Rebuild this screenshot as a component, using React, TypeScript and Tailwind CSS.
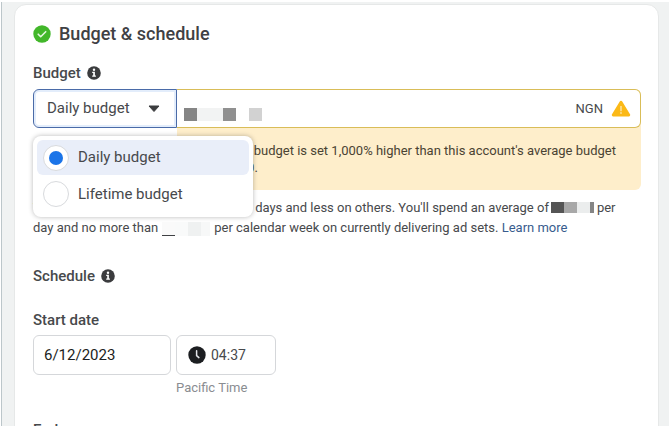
import React, { useState } from "react";
import clsx from "clsx";

const options = [
  { id: "daily", name: "Daily budget" },
  { id: "lifetime", name: "Lifetime budget" },
];

const InfoIcon = () => (
  <svg viewBox="0 0 14 14" className="size-[14px]" aria-hidden="true">
    <circle cx="7" cy="7" r="6.8" fill="#3b3c3e" />
    <circle cx="7" cy="3.7" r="1.2" fill="#fff" />
    <path d="M5.2 5.8h2.7v3.8h1v1.2H5.2V9.6h1V7h-1z" fill="#fff" />
  </svg>
);

const CheckIcon = () => (
  <svg viewBox="0 0 18 18" className="size-[18px]" aria-hidden="true">
    <circle cx="9" cy="9" r="8.7" fill="#42b72a" />
    <path
      d="M5.2 9.2l2.5 2.5 5-5"
      fill="none"
      stroke="#e4f8df"
      strokeWidth="1.6"
      strokeLinecap="round"
      strokeLinejoin="round"
    />
  </svg>
);

const WarningIcon = () => (
  <svg viewBox="0 0 20 18" className="h-[18px] w-5" aria-hidden="true">
    <path
      d="M8.6 1.7a1.6 1.6 0 0 1 2.8 0l7.6 12.6a1.4 1.4 0 0 1-1.2 2.1H2.2a1.4 1.4 0 0 1-1.2-2.1z"
      fill="#fbb917"
    />
    <path d="M9.2 6h1.6v5.2H9.2z" fill="#fde09a" />
    <circle cx="10" cy="13" r="0.9" fill="#fde09a" />
  </svg>
);

const ClockIcon = () => (
  <svg viewBox="0 0 18 18" className="size-[18px] shrink-0" aria-hidden="true">
    <circle cx="9" cy="9" r="8.7" fill="#1c1e21" />
    <path
      d="M8.6 4.8v4.8l2.3 2"
      fill="none"
      stroke="#e4e6eb"
      strokeWidth="1.5"
      strokeLinecap="round"
    />
  </svg>
);

const BudgetMenu = ({
  value,
  onChange,
}: {
  value: string;
  onChange: (id: string) => void;
}) => (
  <div
    role="radiogroup"
    aria-label="Budget type"
    className="absolute top-full left-0 z-10 mt-2 w-[220px] rounded-lg bg-white p-1 shadow-[0_0_5px_rgba(0,0,0,0.28)]"
  >
    {options.map((option) => (
      <label
        key={option.id}
        className={clsx(
          "flex items-center gap-[9px] rounded-md px-[6px] text-[15px] text-[#47494c]",
          value === option.id ? "h-[35px] bg-[#e9eef9]" : "h-[38px]"
        )}
      >
        <span className="relative flex size-[26px] items-center justify-center">
          <input
            type="radio"
            name="budget-type"
            checked={value === option.id}
            onChange={() => onChange(option.id)}
            className="peer size-[26px] appearance-none rounded-full border border-[#d8dadd] bg-white"
          />
          <span className="pointer-events-none absolute hidden size-[14px] rounded-full bg-[#1b74e8] peer-checked:block" />
        </span>
        {option.name}
      </label>
    ))}
  </div>
);

const App = () => {
  const [type, setType] = useState("daily");
  const [open, setOpen] = useState(true);
  const [date, setDate] = useState("6/12/2023");
  const [time, setTime] = useState("04:37");

  const current = options.find((option) => option.id === type);

  const handleSelect = (id: string) => {
    setType(id);
    setOpen(false);
  };

  return (
    <div className="h-screen overflow-hidden border-t-2 border-white bg-white pl-px font-['Roboto',sans-serif] text-[#47494c]">
      <main className="min-h-full border-l border-[#bcc6ca] bg-[#f0f2f2] pt-[2px] pr-[10px] pl-[12px]">
        <section className="rounded-xl border border-[#e6e8e8] bg-white pt-[17px] pr-[17px] pb-6 pl-[18px]">
          <h2 className="flex h-6 items-center gap-2 text-lg font-medium text-[#3f4144]">
            <CheckIcon />
            Budget &amp; schedule
          </h2>

          <div className="mt-[17px] flex h-5 items-center gap-[6px] text-[15px] font-medium">
            <label htmlFor="budget">Budget</label>
            <InfoIcon />
          </div>

          <div className="mt-[6px] flex">
            <div className="relative w-36 self-start">
              <button
                type="button"
                aria-expanded={open}
                onClick={() => setOpen(!open)}
                className="flex h-[39px] w-full items-center justify-between rounded-l-md border border-[#4a6ba8] bg-white pr-4 pl-[13px] text-[15px] shadow-[inset_0_0_0_2px_#e3edfb]"
              >
                {current?.name}
                <svg viewBox="0 0 12 8" className="h-2 w-3" aria-hidden="true">
                  <path
                    d="M1 1h10L6 6.5z"
                    fill="#3b3c3e"
                    stroke="#3b3c3e"
                    strokeLinejoin="round"
                  />
                </svg>
              </button>
              {open && <BudgetMenu value={type} onChange={handleSelect} />}
            </div>

            <div className="min-w-0 flex-1 rounded-r-md bg-[#feeecb]">
              <div className="relative flex h-[39px] items-center gap-2 rounded-r-md border border-l-0 border-[#d9bd58] bg-white pr-[9px]">
                <input
                  id="budget"
                  type="text"
                  className="h-full min-w-0 flex-1 px-2 text-[15px] outline-none"
                />
                {/* masked amount */}
                <span className="pointer-events-none absolute top-[18px] left-[7px] flex h-[13px]">
                  <span className="w-[13px] bg-[#858585]" />
                  <span className="w-[26px] bg-[#f2f3f3]" />
                  <span className="w-[13px] bg-[#909090]" />
                  <span className="ml-[13px] w-[13px] bg-[#d2d2d2]" />
                </span>
                <span className="text-[13px]">NGN</span>
                <WarningIcon />
              </div>
              <p className="pt-[14px] pr-5 pb-[14px] pl-[17px] text-[13px] leading-[17px] text-[#4a4333]">
                Your daily budget is set 1,000% higher than this account's average budget
                of NGN 10.
              </p>
            </div>
          </div>

          <p className="mt-2 text-[13px] leading-5">
            You'll spend up to
            <span className="inline-block w-[67px]" />
            on some days and less on others. You'll spend an average of
            <span className="mr-[3px] ml-[2px] inline-flex h-[11px] w-[43px] align-[-1px]">
              <span className="w-[13px] bg-[#555]" />
              <span className="w-[13px] bg-[#a8a8a8]" />
              <span className="w-[13px] bg-[#ebeded]" />
              <span className="w-1 bg-[#858585]" />
            </span>
            per
            <br />
            day and no more than
            <span className="mr-1 ml-1 inline-flex h-[14px] w-12 align-[-4px]">
              <span className="w-[13px] border-b border-[#3f4144] bg-[#fafafa]" />
              <span className="w-[13px] bg-[#f9fafa]" />
              <span className="w-[13px] bg-[#eff1f1]" />
              <span className="w-[9px] bg-[#f7f8f8]" />
            </span>
            per calendar week on currently delivering ad sets.{" "}
            <a href="#learn-more" className="text-[#385c8e]">
              Learn more
            </a>
          </p>

          <h3 className="mt-7 flex h-5 items-center gap-[6px] text-[15px] font-medium">
            Schedule
            <InfoIcon />
          </h3>

          <div className="mt-6 text-[15px] leading-5 font-medium">
            <label htmlFor="start-date">Start date</label>
          </div>
          <div className="mt-[5px] flex items-start gap-[5px]">
            <input
              id="start-date"
              type="text"
              value={date}
              onChange={(e) => setDate(e.target.value)}
              className="h-10 w-[138px] rounded-md border border-[#d5d7da] px-[10px] text-[15px] text-[#1c1e21]"
            />
            <div className="w-[100px]">
              <div className="flex h-10 items-center gap-[5px] rounded-md border border-[#d5d7da] px-[11px]">
                <ClockIcon />
                <input
                  type="text"
                  aria-label="Start time"
                  value={time}
                  onChange={(e) => setTime(e.target.value)}
                  className="w-full min-w-0 text-sm outline-none"
                />
              </div>
              <p className="mt-[3px] text-[13px] leading-5 text-[#8a8d91]">Pacific Time</p>
            </div>
          </div>

          <h3 className="mt-[22px] text-[15px] leading-5 font-medium">End</h3>
        </section>
      </main>
    </div>
  );
};

export default App;
